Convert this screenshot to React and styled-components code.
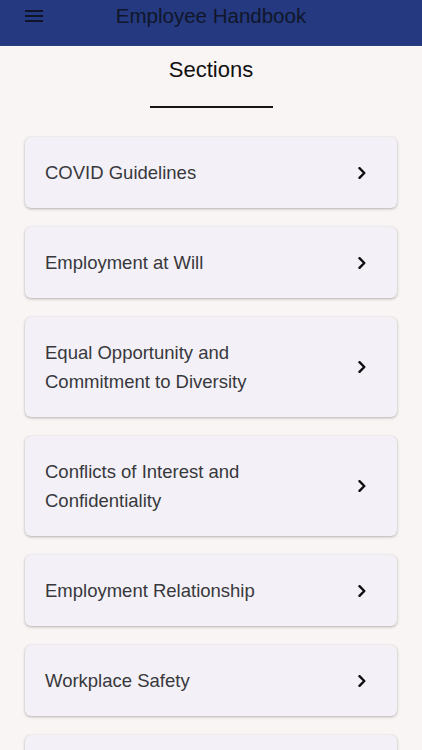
import React from "react";
import styled, { createGlobalStyle } from "styled-components";

const Global = createGlobalStyle`
  html, body { margin: 0; padding: 0; background: #faf5f5; }
  body { font-family: "Liberation Sans", Arial, sans-serif; -webkit-font-smoothing: antialiased; }
  * { box-sizing: border-box; }
`;

const Page = styled.div`
  width: 422px;
  height: 750px;
  overflow: hidden;
  background: #faf5f5;
  display: flex;
  flex-direction: column;
`;

const Header = styled.header`
  flex-shrink: 0;
  height: 46px;
  background: #24397f;
  display: grid;
  grid-template-columns: 60px 1fr 60px;
  align-items: start;
  padding-top: 4px;
  border-bottom: 1px solid #2b3f80;
`;

const MenuButton = styled.div`
  height: 24px;
  display: flex;
  align-items: center;
  padding-left: 25px;
`;

const Title = styled.h1`
  margin: 0;
  font-size: 20.5px;
  line-height: 24px;
  font-weight: 400;
  color: #11162a;
  text-align: center;
  white-space: nowrap;
`;

const SectionHead = styled.div`
  flex-shrink: 0;
  display: flex;
  flex-direction: column;
  align-items: center;
  padding-top: 11px;
`;

const SectionTitle = styled.h2`
  margin: 0;
  font-size: 22px;
  line-height: 26px;
  font-weight: 400;
  color: #111;
`;

const Rule = styled.div`
  width: 123px;
  height: 2px;
  background: #151515;
  margin-top: 23px;
`;

const List = styled.div`
  flex-shrink: 0;
  display: flex;
  flex-direction: column;
  gap: 19px;
  padding: 29px 25px 0;
`;

const Card = styled.div`
  display: flex;
  align-items: center;
  justify-content: space-between;
  background: #f3f1f7;
  border-radius: 6px;
  padding: 21px 31px 21px 20px;
  box-shadow: 0 1px 3px rgba(0, 0, 0, 0.28), 0 0 1px rgba(0, 0, 0, 0.08);
`;

const Label = styled.span`
  font-size: 18.5px;
  line-height: 29px;
  color: #38383c;
  max-width: 250px;
`;

const Chevron = () => (
  <svg width="8" height="12" viewBox="0 0 8 12" fill="none">
    <path d="M1.5 1.2 L6.3 6 L1.5 10.8" stroke="#0d0d0d" strokeWidth="2.4" strokeLinecap="round" strokeLinejoin="round" />
  </svg>
);

const Hamburger = () => (
  <svg width="18" height="14" viewBox="0 0 18 14">
    <rect x="0" y="1" width="18" height="2" fill="#0f1428" />
    <rect x="0" y="6" width="18" height="2" fill="#0f1428" />
    <rect x="0" y="11" width="18" height="2" fill="#0f1428" />
  </svg>
);

const sections = [
  "COVID Guidelines",
  "Employment at Will",
  "Equal Opportunity and Commitment to Diversity",
  "Conflicts of Interest and Confidentiality",
  "Employment Relationship",
  "Workplace Safety",
  "Standards of Conduct",
];

export default function App() {
  return (
    <>
      <Global />
      <Page>
        <Header>
          <MenuButton>
            <Hamburger />
          </MenuButton>
          <Title>Employee Handbook</Title>
          <div />
        </Header>
        <SectionHead>
          <SectionTitle>Sections</SectionTitle>
          <Rule />
        </SectionHead>
        <List>
          {sections.map((s) => (
            <Card key={s}>
              <Label>{s}</Label>
              <Chevron />
            </Card>
          ))}
        </List>
      </Page>
    </>
  );
}
